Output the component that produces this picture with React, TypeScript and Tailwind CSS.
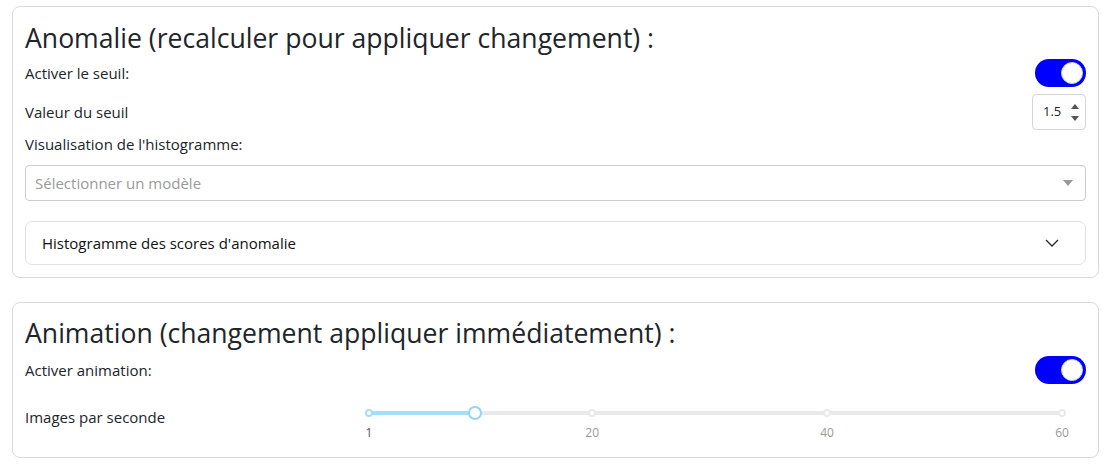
import { useState } from 'react';

const FONT = { fontFamily: '"Open Sans", "Noto Sans", sans-serif' };

const FPS_MIN = 1;
const FPS_MAX = 60;
const MARKS = [1, 20, 40, 60];

function Toggle({ on, onChange }: { on: boolean; onChange: (v: boolean) => void }) {
  return (
    <button
      onClick={() => onChange(!on)}
      className={`relative w-[51px] h-[28px] rounded-full shrink-0 flex items-center px-[3px] ${on ? 'bg-[#0000ff] justify-end' : 'bg-[#cccccc] justify-start'}`}
      aria-pressed={on}
    >
      <span className="block w-[22px] h-[22px] rounded-full bg-white border border-[#d0d0d0]" />
    </button>
  );
}

function FpsSlider({ value }: { value: number }) {
  const pct = (v: number) => ((v - FPS_MIN) / (FPS_MAX - FPS_MIN)) * 100;
  return (
    <div className="relative w-[693px] h-[45px]">
      {/* rail */}
      <div className="absolute left-0 right-0 top-[10px] h-[4px] rounded-full bg-[#e9e9e9]" />
      {/* track */}
      <div
        className="absolute left-0 top-[10px] h-[4px] rounded-full bg-[#a6ddf7]"
        style={{ width: `${pct(value)}%` }}
      />
      {/* dots */}
      {MARKS.map(m => (
        <span
          key={m}
          className={`absolute top-[8px] w-[8px] h-[8px] -ml-[4px] rounded-full bg-white border-2 ${m <= value ? 'border-[#a6ddf7]' : 'border-[#e9e9e9]'}`}
          style={{ left: `${pct(m)}%` }}
        />
      ))}
      {/* handle */}
      <span
        className="absolute top-[5px] w-[14px] h-[14px] -ml-[7px] rounded-full bg-white border-2 border-[#91d5ff]"
        style={{ left: `${pct(value)}%` }}
      />
      {/* labels */}
      {MARKS.map(m => (
        <span
          key={m}
          className={`absolute top-[25px] -translate-x-1/2 text-[12px] leading-[14px] ${m <= value ? 'text-[#555555]' : 'text-[#999999]'}`}
          style={{ left: `${pct(m)}%`, fontFamily: '"Open Sans", sans-serif' }}
        >
          {m}
        </span>
      ))}
    </div>
  );
}

export default function App() {
  const [threshold, setThreshold] = useState(true);
  const [animation, setAnimation] = useState(true);
  const [value, setValue] = useState('1.5');

  return (
    <div className="w-[1117px] min-h-[474px] bg-white text-[#212529] pl-[12px] pt-[6px]" style={FONT}>
      {/* Anomalie */}
      <section className="w-[1087px] border border-[#d9d9d9] rounded-[8px] px-[12px] pt-[15px] pb-[12px] flex flex-col">
        <h3 className="text-[26.6px] leading-[33px] font-normal">
          Anomalie (recalculer pour appliquer changement) :
        </h3>
        <div className="mt-[4px] h-[28px] flex items-center justify-between">
          <span className="text-[15px]">Activer le seuil:</span>
          <Toggle on={threshold} onChange={setThreshold} />
        </div>
        <div className="mt-[7px] h-[36px] flex items-center justify-between">
          <span className="text-[15px]">Valeur du seuil</span>
          <div className="w-[54px] h-[36px] border border-[#d5d5d5] rounded-[4px] flex items-center pl-[10px] pr-[4px]">
            <input
              value={value}
              onChange={e => setValue(e.target.value)}
              className="w-[24px] text-[13px] text-[#212529] bg-transparent outline-none"
            />
            <div className="flex flex-col items-center gap-[7px] ml-auto mr-[2px]">
              <svg width="8" height="5" viewBox="0 0 8 5"><path d="M0 5 L4 0 L8 5 Z" fill="#555" /></svg>
              <svg width="8" height="5" viewBox="0 0 8 5"><path d="M0 0 L4 5 L8 0 Z" fill="#555" /></svg>
            </div>
          </div>
        </div>
        <div className="mt-[2px] h-[24px] flex items-center text-[15px]">Visualisation de l'histogramme:</div>
        <div className="mt-[9px] h-[36px] border border-[#cccccc] rounded-[4px] flex items-center justify-between pl-[9px] pr-[12px]">
          <span className="text-[15px] text-[#9a9a9a]">Sélectionner un modèle</span>
          <svg width="10" height="6" viewBox="0 0 10 6"><path d="M0 0 L10 0 L5 6 Z" fill="#999" /></svg>
        </div>
        <div className="mt-[20px] h-[44px] border border-[#dee2e6] rounded-[7px] flex items-center justify-between pl-[16px] pr-[25px]">
          <span className="text-[15px] text-[#111111]">Histogramme des scores d'anomalie</span>
          <svg width="16" height="16" viewBox="0 0 16 16" fill="none">
            <path d="M2 5 L8 11 L14 5" stroke="#212529" strokeWidth="1.3" />
          </svg>
        </div>
      </section>

      {/* Animation */}
      <section className="mt-[24px] w-[1087px] border border-[#d9d9d9] rounded-[8px] px-[12px] pt-[14px] pb-[11px] flex flex-col">
        <h3 className="text-[26.6px] leading-[33px] font-normal">
          Animation (changement appliquer immédiatement) :
        </h3>
        <div className="mt-[6px] h-[28px] flex items-center justify-between">
          <span className="text-[15px]">Activer animation:</span>
          <Toggle on={animation} onChange={setAnimation} />
        </div>
        <div className="mt-[17px] flex items-start">
          <span className="w-[344px] shrink-0 text-[15px] leading-[24px] mt-[4px]">Images par seconde</span>
          <FpsSlider value={10} />
        </div>
      </section>
    </div>
  );
}
